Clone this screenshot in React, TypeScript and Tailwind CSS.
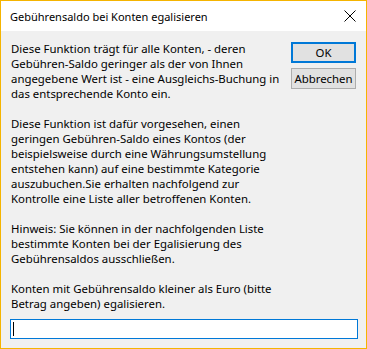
const paragraphs: string[][] = [
  [
    "Diese Funktion trägt für alle Konten, - deren",
    "Gebühren-Saldo geringer als der von Ihnen",
    "angegebene Wert ist - eine Ausgleichs-Buchung in",
    "das entsprechende Konto ein.",
  ],
  [
    "Diese Funktion ist dafür vorgesehen, einen",
    "geringen Gebühren-Saldo eines Kontos (der",
    "beispielsweise durch eine Währungsumstellung",
    "entstehen kann) auf eine bestimmte Kategorie",
    "auszubuchen.Sie erhalten nachfolgend zur",
    "Kontrolle eine Liste aller betroffenen Konten.",
  ],
  [
    "Hinweis: Sie können in der nachfolgenden Liste",
    "bestimmte Konten bei der Egalisierung des",
    "Gebührensaldos ausschließen.",
  ],
  ["Konten mit Gebührensaldo kleiner als Euro (bitte", "Betrag angeben) egalisieren."],
];

const App = () => {
  return (
    <div className="flex h-[349px] w-[367px] flex-col border border-[#f5b400] bg-[#f0f0f0] font-['Noto_Sans',sans-serif] text-[11.4px] text-black">
      {/* title bar */}
      <div className="flex h-[30px] items-center justify-between bg-white pl-[9px] pr-[9px]">
        <span className="text-[11px] leading-none">Gebührensaldo bei Konten egalisieren</span>
        <svg width="12" height="12" viewBox="0 0 12 12" className="mr-[1px]">
          <path d="M0.5 0.5 L11.5 11.5 M11.5 0.5 L0.5 11.5" stroke="#000" strokeWidth="1" />
        </svg>
      </div>

      <div className="flex flex-1 flex-col px-[9px] pt-[10px]">
        <div className="flex">
          <div className="flex min-w-0 flex-1 flex-col gap-[15px] pl-[1px] leading-[15px]">
            {paragraphs.map((lines, i) => (
              <p key={i}>
                {lines.map((l) => (
                  <span key={l} className="block whitespace-nowrap">
                    {l}
                  </span>
                ))}
              </p>
            ))}
          </div>
          <div className="mr-[1px] flex shrink-0 flex-col gap-[5px] pt-[1px]">
            <button className="flex h-[21px] w-[65px] items-center justify-center border-2 border-[#0078d7] bg-[#e1e1e1] leading-none">
              OK
            </button>
            <button className="flex h-[21px] w-[65px] items-center justify-center border border-[#adadad] bg-[#e1e1e1] leading-none">
              Abbrechen
            </button>
          </div>
        </div>
        <div className="mt-[8px] flex h-[20px] w-[348px] items-center border border-[#0078d7] bg-white pl-[2px]">
          <span className="h-[14px] w-[1px] bg-black" />
        </div>
      </div>
    </div>
  );
};

export default App;
